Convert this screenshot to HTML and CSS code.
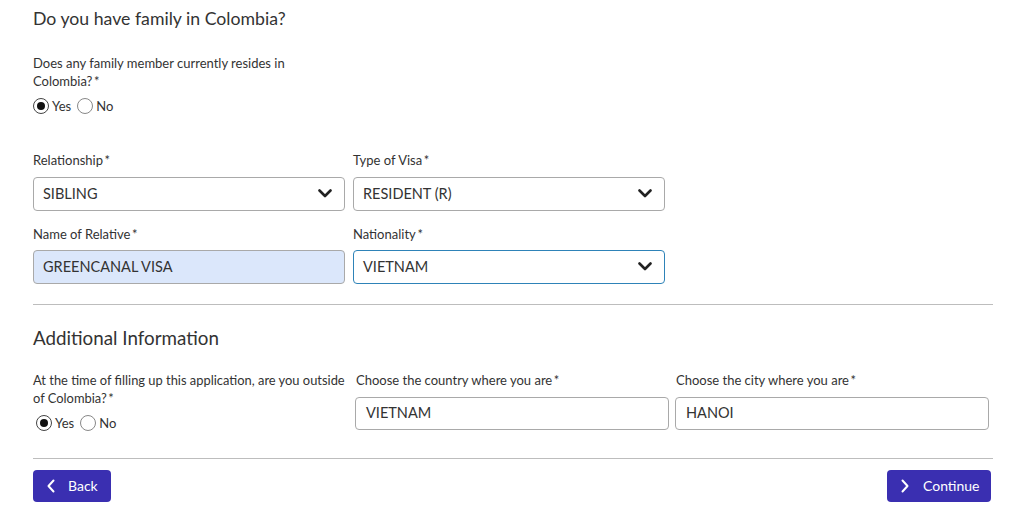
FILE: index.html
```html
<!DOCTYPE html>
<html>
<head>
<meta charset="utf-8">
<link rel="stylesheet" href="styles.css">
</head>
<body>
<div class="page">
  <h2 class="title">Do you have family in Colombia?</h2>

  <div class="question">
    <div class="qlabel">Does any family member currently resides in Colombia?&#8201;*</div>
    <div class="radios">
      <span class="radio checked"></span><span class="rtext">Yes</span>
      <span class="radio"></span><span class="rtext">No</span>
    </div>
  </div>

  <div class="grid2">
    <div class="field">
      <div class="flabel">Relationship&#8201;*</div>
      <div class="box select"><span>SIBLING</span><svg class="chev" width="14" height="9" viewBox="0 0 14 9"><path d="M1.5 1.5 L7 7 L12.5 1.5" fill="none" stroke="#222" stroke-width="2.6" stroke-linecap="round" stroke-linejoin="round"/></svg></div>
    </div>
    <div class="field">
      <div class="flabel">Type of Visa&#8201;*</div>
      <div class="box select"><span>RESIDENT (R)</span><svg class="chev" width="14" height="9" viewBox="0 0 14 9"><path d="M1.5 1.5 L7 7 L12.5 1.5" fill="none" stroke="#222" stroke-width="2.6" stroke-linecap="round" stroke-linejoin="round"/></svg></div>
    </div>
    <div class="field">
      <div class="flabel">Name of Relative&#8201;*</div>
      <div class="box filled"><span>GREENCANAL VISA</span></div>
    </div>
    <div class="field">
      <div class="flabel">Nationality&#8201;*</div>
      <div class="box select focus"><span>VIETNAM</span><svg class="chev" width="14" height="9" viewBox="0 0 14 9"><path d="M1.5 1.5 L7 7 L12.5 1.5" fill="none" stroke="#222" stroke-width="2.6" stroke-linecap="round" stroke-linejoin="round"/></svg></div>
    </div>
  </div>

  <hr class="sep first">

  <h2 class="title sub">Additional Information</h2>

  <div class="grid3">
    <div class="field">
      <div class="qlabel wide">At the time of filling up this application, are you outside of Colombia?&#8201;*</div>
      <div class="radios r2">
        <span class="radio checked"></span><span class="rtext">Yes</span>
        <span class="radio"></span><span class="rtext">No</span>
      </div>
    </div>
    <div class="field">
      <div class="flabel">Choose the country where you are&#8201;*</div>
      <div class="box short"><span>VIETNAM</span></div>
    </div>
    <div class="field">
      <div class="flabel">Choose the city where you are&#8201;*</div>
      <div class="box short"><span>HANOI</span></div>
    </div>
  </div>

  <hr class="sep second">

  <div class="actions">
    <button class="btn back"><svg width="10" height="14" viewBox="0 0 10 14"><path d="M7.5 1.5 L2.5 7 L7.5 12.5" fill="none" stroke="#fff" stroke-width="2" stroke-linecap="round" stroke-linejoin="round"/></svg><span>Back</span></button>
    <button class="btn next"><svg width="10" height="14" viewBox="0 0 10 14"><path d="M2.5 1.5 L7.5 7 L2.5 12.5" fill="none" stroke="#fff" stroke-width="2" stroke-linecap="round" stroke-linejoin="round"/></svg><span>Continue</span></button>
  </div>
</div>
</body>
</html>
```

FILE: styles.css
```css
* { box-sizing: border-box; }
body {
  margin: 0;
  background: #fff;
  font-family: Lato, "Open Sans", Arial, sans-serif;
  color: #333;
}
.page {
  width: 1024px;
  padding: 7px 31px 0 33px;
}
.title {
  margin: 0;
  font-size: 17.7px;
  font-weight: 400;
  line-height: 24px;
  color: #333;
}
.title.sub { font-size: 18.8px; }
.question {
  margin-top: 23px;
}
.qlabel {
  width: 290px;
  font-size: 13px;
  line-height: 18px;
  color: #333;
}
.qlabel.wide { width: 316px; font-size: 12.9px; }
.radios {
  display: flex;
  align-items: center;
  height: 20px;
  margin-top: 6px;
  font-size: 13px;
}
.radios.r2 { margin-top: 6px; padding-left: 3px; }
.radio {
  width: 16px;
  height: 16px;
  border: 1px solid #888;
  border-radius: 50%;
  display: inline-flex;
  align-items: center;
  justify-content: center;
  background: #fff;
  flex: none;
}
.radio.checked { border-color: #444; }
.radio.checked::after {
  content: "";
  width: 8px;
  height: 8px;
  border-radius: 50%;
  background: #111;
}
.rtext { margin: 0 6px 0 3px; }
.grid2 {
  margin-top: 35px;
  display: grid;
  grid-template-columns: 312px 312px;
  column-gap: 8px;
  row-gap: 14px;
}
.flabel {
  font-size: 13px;
  line-height: 18px;
  height: 18px;
  margin-bottom: 8px;
  white-space: nowrap;
}
.grid2 .field:nth-child(n+3) .flabel { margin-bottom: 7px; }
.box {
  height: 34px;
  border: 1px solid #a9a9a9;
  border-radius: 4px;
  display: flex;
  align-items: center;
  justify-content: space-between;
  padding: 0 12px 2px 9px;
  font-size: 14.5px;
  color: #333;
  background: #fff;
}
.box.filled { background: #dbe7fb; }
.box.focus { border-color: #2e83b8; }
.box.short { height: 33px; padding-left: 10px; }
.chev { flex: none; margin-top: 1px; }
.sep {
  border: 0;
  border-top: 1px solid #bdbdbd;
  width: 960px;
  margin: 0;
}
.sep.first { margin-top: 20px; }
.title.sub { margin-top: 21px; }
.grid3 {
  margin-top: 21px;
  display: grid;
  grid-template-columns: 316px 314px 314px;
  column-gap: 6px;
}
.grid3 .field:nth-child(n+2) .flabel { padding-left: 1px; }
.sep.second { margin-top: 25px; }
.actions {
  margin-top: 11px;
  width: 958px;
  display: flex;
  justify-content: space-between;
}
.btn {
  height: 32px;
  border: 0;
  border-radius: 4px;
  background: #3a2fb1;
  color: #fff;
  font-family: Lato, "Open Sans", Arial, sans-serif;
  font-size: 14px;
  display: flex;
  align-items: center;
  padding: 0 0 1px 13px;
  cursor: pointer;
}
.btn svg { flex: none; }
.btn.back { width: 78px; }
.btn.back span { margin-left: 12px; }
.btn.next { width: 104px; }
.btn.next span { margin-left: 13px; }
```
